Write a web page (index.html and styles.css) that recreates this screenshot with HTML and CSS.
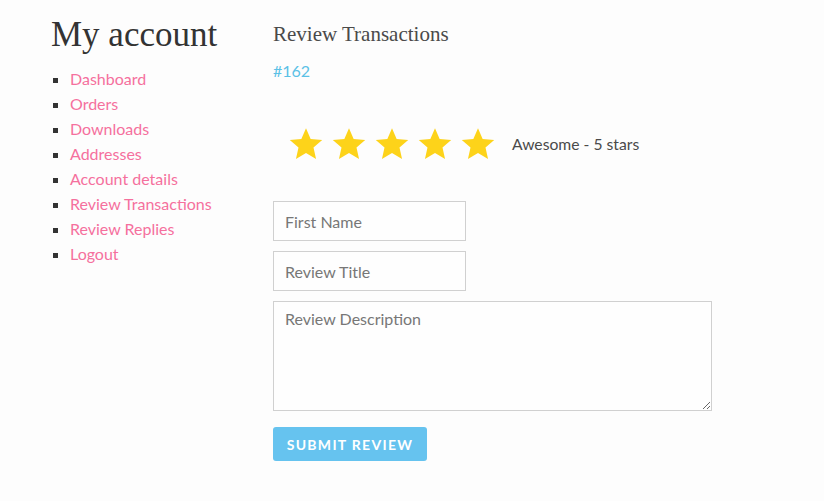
FILE: index.html
```html
<!DOCTYPE html>
<html>
<head>
<meta charset="utf-8">
<link rel="stylesheet" href="styles.css">
</head>
<body>
<div class="page">
  <aside class="sidebar">
    <h1 class="title">My account</h1>
    <ul class="nav">
      <li><a href="#">Dashboard</a></li>
      <li><a href="#">Orders</a></li>
      <li><a href="#">Downloads</a></li>
      <li><a href="#">Addresses</a></li>
      <li><a href="#">Account details</a></li>
      <li><a href="#">Review Transactions</a></li>
      <li><a href="#">Review Replies</a></li>
      <li><a href="#">Logout</a></li>
    </ul>
  </aside>
  <main class="content">
    <h2 class="subtitle">Review Transactions</h2>
    <a class="order" href="#">#162</a>
    <div class="rating">
      <div class="stars">
        <svg class="star" viewBox="0 0 24 24"><path d="M12 1.5l3.1 7.1 7.7.7-5.8 5.1 1.7 7.6L12 18l-6.7 4 1.7-7.6L1.2 9.3l7.7-.7z"/></svg>
        <svg class="star" viewBox="0 0 24 24"><path d="M12 1.5l3.1 7.1 7.7.7-5.8 5.1 1.7 7.6L12 18l-6.7 4 1.7-7.6L1.2 9.3l7.7-.7z"/></svg>
        <svg class="star" viewBox="0 0 24 24"><path d="M12 1.5l3.1 7.1 7.7.7-5.8 5.1 1.7 7.6L12 18l-6.7 4 1.7-7.6L1.2 9.3l7.7-.7z"/></svg>
        <svg class="star" viewBox="0 0 24 24"><path d="M12 1.5l3.1 7.1 7.7.7-5.8 5.1 1.7 7.6L12 18l-6.7 4 1.7-7.6L1.2 9.3l7.7-.7z"/></svg>
        <svg class="star" viewBox="0 0 24 24"><path d="M12 1.5l3.1 7.1 7.7.7-5.8 5.1 1.7 7.6L12 18l-6.7 4 1.7-7.6L1.2 9.3l7.7-.7z"/></svg>
      </div>
      <span class="rating-label">Awesome - 5 stars</span>
    </div>
    <form class="form">
      <input class="field" type="text" placeholder="First Name">
      <input class="field" type="text" placeholder="Review Title">
      <textarea class="area" placeholder="Review Description"></textarea>
      <button class="submit" type="button">Submit Review</button>
    </form>
  </main>
</div>
</body>
</html>
```

FILE: styles.css
```css
html, body {
  margin: 0;
  padding: 0;
  background: #fdfdfd;
}
body {
  font-family: Lato, "Noto Sans", sans-serif;
  color: #444;
}
.page {
  display: flex;
  padding: 0 0 0 51px;
}
.sidebar {
  width: 222px;
  flex: none;
}
.title {
  font-family: "Liberation Serif", serif;
  font-weight: normal;
  font-size: 35px;
  line-height: 42px;
  color: #333;
  margin: 14px 0 0 0;
}
.nav {
  list-style: square;
  margin: 10px 0 0 0;
  padding: 0 0 0 19px;
  font-size: 16px;
  line-height: 25px;
  color: #333;
}
.nav a {
  color: #f5709d;
  text-decoration: none;
}
.content {
  flex: 1;
}
.subtitle {
  font-family: "Liberation Serif", serif;
  font-weight: normal;
  font-size: 21px;
  line-height: 26px;
  color: #4a4a4a;
  margin: 21px 0 0 0;
}
.order {
  display: block;
  margin-top: 14px;
  font-size: 16px;
  line-height: 20px;
  color: #5bc1e6;
  text-decoration: none;
}
.rating {
  display: flex;
  align-items: center;
  margin-top: 45px;
  padding-left: 15px;
}
.stars {
  display: flex;
  gap: 7px;
}
.star {
  width: 36px;
  height: 36px;
  fill: #fdd31a;
}
.rating-label {
  margin-left: 16px;
  font-size: 15.7px;
  color: #4a4a4a;
}
.form {
  display: flex;
  flex-direction: column;
  align-items: flex-start;
  margin-top: 39px;
}
.field, .area {
  box-sizing: border-box;
  border: 1px solid #d0d0d0;
  background: #fefefe;
  font-family: Lato, "Noto Sans", sans-serif;
  font-size: 16px;
  color: #444;
  padding: 0 11px;
  margin: 0 0 10px 0;
  outline: none;
}
.field {
  width: 193px;
  height: 40px;
}
.area {
  width: 439px;
  height: 110px;
  padding-top: 7px;
  resize: vertical;
  margin-bottom: 16px;
}
.field::placeholder, .area::placeholder {
  color: #777;
}
.submit {
  width: 154px;
  height: 34px;
  border: none;
  border-radius: 3px;
  background: #66c3ef;
  color: #fff;
  font-family: Lato, "Noto Sans", sans-serif;
  font-weight: bold;
  font-size: 14px;
  letter-spacing: 1.3px;
  text-transform: uppercase;
  padding: 0;
}
```
